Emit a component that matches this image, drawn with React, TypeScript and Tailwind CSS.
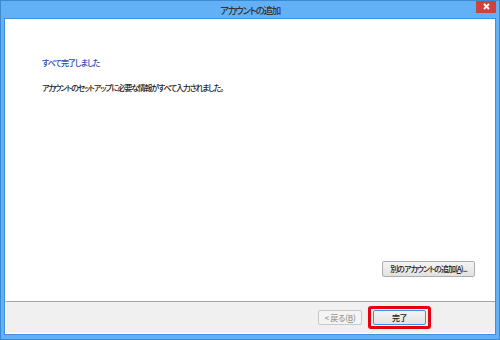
import React from "react";

const jp = { fontFamily: '"Noto Sans CJK JP", "Noto Sans", sans-serif' };

export default function App() {
  return (
    <div
      className="w-[500px] h-[340px] bg-[#62b1f7] border border-[#3c8ad6] flex flex-col overflow-hidden [font-feature-settings:'palt'] font-medium"
      style={jp}
    >
      <div className="h-[17px] relative flex items-center justify-center">
        <span className="text-[9.5px] leading-none tracking-[-1.3px] text-[#333] mt-[2px] whitespace-nowrap">
          アカウントの追加
        </span>
        <div className="absolute right-[3px] top-[-1px] w-[20px] h-[13px] bg-[#c9453f] flex items-center justify-center">
          <svg width="7" height="7" viewBox="0 0 7 7">
            <path d="M1 1 L6 6 M6 1 L1 6" stroke="#fff" strokeWidth="1.8" />
          </svg>
        </div>
      </div>
      <div className="flex-1 mx-[3px] mb-[4px] border border-[#3f8fdc] bg-white flex flex-col">
        <div className="flex-1 flex flex-col px-[37px] pt-[38px] pb-[24px]">
          <div className="text-[8px] leading-[12px] tracking-[-1px] text-[#1f48b0] whitespace-nowrap">
            すべて完了しました
          </div>
          <div className="mt-[13px] text-[8px] leading-[12px] tracking-[-1.25px] text-[#222] whitespace-nowrap">
            アカウントのセットアップに必要な情報がすべて入力されました。
          </div>
          <div className="mt-auto flex justify-end mr-[-17px]">
            <div className="w-[93px] h-[16px] border border-[#adadad] rounded-[2px] bg-gradient-to-b from-[#f4f4f4] to-[#e2e2e2] flex items-center justify-center text-[8px] leading-none tracking-[-1px] text-[#222] whitespace-nowrap">
              別のアカウントの追加(<span className="underline">A</span>)...
            </div>
          </div>
        </div>
        <div className="h-[33px] border-t border-[#a3a3a3] bg-[#f0f0f0] border-l border-l-white border-b border-b-white flex items-center justify-end pr-[64px]">
          <div className="w-[44px] h-[15px] border border-[#c9c9c9] rounded-[2px] bg-[#f4f4f4] flex items-center justify-center text-[8px] leading-none tracking-[-0.2px] text-[#9a9a9a] mr-[6px] whitespace-nowrap">
            &lt; 戻る(<span className="underline">B</span>)
          </div>
          <div className="w-[63px] h-[23px] border-[3px] border-[#e60012] rounded-[3px] flex items-center justify-center">
            <div className="w-[53px] h-[15px] border border-[#3c93e0] rounded-[2px] bg-gradient-to-b from-[#f4f4f4] to-[#e2e2e2] flex items-center justify-center text-[8px] leading-none tracking-[-0.5px] text-[#222] whitespace-nowrap">
              完了
            </div>
          </div>
        </div>
      </div>
    </div>
  );
}
